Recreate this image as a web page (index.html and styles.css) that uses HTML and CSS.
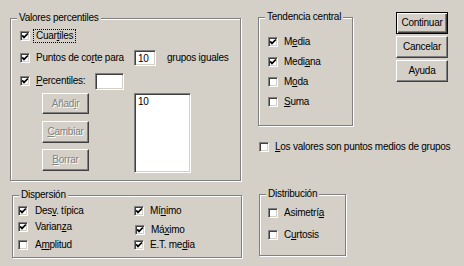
FILE: index.html
```html
<!DOCTYPE html>
<html lang="es">
<head>
<meta charset="utf-8">
<title>Frecuencias: Estadísticos</title>
<link rel="stylesheet" href="styles.css">
</head>
<body>
<div class="dialog">
  <div class="col-left">
    <fieldset class="group g-valores">
      <legend>Valores percentiles</legend>
      <div class="gbody">
        <div class="row r-cuart">
          <span class="cb"><svg viewBox="0 0 8 8" width="8" height="8"><path d="M1.2 3.4 L3 5.4 L6.9 1.5" fill="none" stroke="#000" stroke-width="1.7"/></svg></span>
          <span class="lbl focus">Cuar<u>t</u>iles</span>
        </div>
        <div class="row r-puntos">
          <span class="cb"><svg viewBox="0 0 8 8" width="8" height="8"><path d="M1.2 3.4 L3 5.4 L6.9 1.5" fill="none" stroke="#000" stroke-width="1.7"/></svg></span>
          <span class="lbl w-puntos">Puntos de co<u>r</u>te para</span>
          <span class="field f-puntos">10</span>
          <span class="lbl after">grupos iguales</span>
        </div>
        <div class="row r-perc">
          <span class="cb"><svg viewBox="0 0 8 8" width="8" height="8"><path d="M1.2 3.4 L3 5.4 L6.9 1.5" fill="none" stroke="#000" stroke-width="1.7"/></svg></span>
          <span class="lbl w-perc"><u>P</u>ercentiles:</span>
          <span class="field f-perc"></span>
        </div>
        <div class="perc-edit">
          <div class="btn-col">
            <button class="btn dis b-add">Añad<u>i</u>r</button>
            <button class="btn dis b-chg"><u>C</u>ambiar</button>
            <button class="btn dis b-del"><u>B</u>orrar</button>
          </div>
          <div class="listbox">10</div>
        </div>
      </div>
    </fieldset>
    <fieldset class="group g-disp">
      <legend>Dispersión</legend>
      <div class="gbody">
        <div class="row">
          <span class="cb"><svg viewBox="0 0 8 8" width="8" height="8"><path d="M1.2 3.4 L3 5.4 L6.9 1.5" fill="none" stroke="#000" stroke-width="1.7"/></svg></span>
          <span class="lbl l-left">Des<u>v</u>. típica</span>
        </div>
        <div class="row">
          <span class="cb"><svg viewBox="0 0 8 8" width="8" height="8"><path d="M1.2 3.4 L3 5.4 L6.9 1.5" fill="none" stroke="#000" stroke-width="1.7"/></svg></span>
          <span class="lbl">Mí<u>n</u>imo</span>
        </div>
        <div class="row up">
          <span class="cb"><svg viewBox="0 0 8 8" width="8" height="8"><path d="M1.2 3.4 L3 5.4 L6.9 1.5" fill="none" stroke="#000" stroke-width="1.7"/></svg></span>
          <span class="lbl l-left">Varian<u>z</u>a</span>
        </div>
        <div class="row down">
          <span class="cb cb-shift"><svg viewBox="0 0 8 8" width="8" height="8"><path d="M1.2 3.4 L3 5.4 L6.9 1.5" fill="none" stroke="#000" stroke-width="1.7"/></svg></span>
          <span class="lbl">Má<u>x</u>imo</span>
        </div>
        <div class="row">
          <span class="cb"></span>
          <span class="lbl l-left">A<u>m</u>plitud</span>
        </div>
        <div class="row">
          <span class="cb"><svg viewBox="0 0 8 8" width="8" height="8"><path d="M1.2 3.4 L3 5.4 L6.9 1.5" fill="none" stroke="#000" stroke-width="1.7"/></svg></span>
          <span class="lbl">E.T. me<u>d</u>ia</span>
        </div>
      </div>
    </fieldset>
  </div>

  <div class="col-right">
    <div class="top-row">
      <fieldset class="group g-tend">
        <legend>Tendencia central</legend>
        <div class="gbody">
          <div class="row">
            <span class="cb"><svg viewBox="0 0 8 8" width="8" height="8"><path d="M1.2 3.4 L3 5.4 L6.9 1.5" fill="none" stroke="#000" stroke-width="1.7"/></svg></span>
            <span class="lbl">M<u>e</u>dia</span>
          </div>
          <div class="row">
            <span class="cb"><svg viewBox="0 0 8 8" width="8" height="8"><path d="M1.2 3.4 L3 5.4 L6.9 1.5" fill="none" stroke="#000" stroke-width="1.7"/></svg></span>
            <span class="lbl">Medi<u>a</u>na</span>
          </div>
          <div class="row">
            <span class="cb"></span>
            <span class="lbl">M<u>o</u>da</span>
          </div>
          <div class="row">
            <span class="cb"></span>
            <span class="lbl"><u>S</u>uma</span>
          </div>
        </div>
      </fieldset>
      <div class="buttons">
        <button class="btn default">Continuar</button>
        <button class="btn">Cancelar</button>
        <button class="btn">Ayuda</button>
      </div>
    </div>
    <div class="row cb-row">
      <span class="cb"></span>
      <span class="lbl"><u>L</u>os valores son puntos medios de grupos</span>
    </div>
    <fieldset class="group g-dist">
      <legend>Distribución</legend>
      <div class="gbody">
        <div class="row">
          <span class="cb"></span>
          <span class="lbl">Asimetrí<u>a</u></span>
        </div>
        <div class="row">
          <span class="cb"></span>
          <span class="lbl">C<u>u</u>rtosis</span>
        </div>
      </div>
    </fieldset>
  </div>
</div>
</body>
</html>
```

FILE: styles.css
```css
* { box-sizing: border-box; }

html, body {
  margin: 0;
  padding: 0;
}

body {
  width: 464px;
  height: 266px;
  overflow: hidden;
  background: #d4d0c8;
  color: #000;
  font-family: "Liberation Sans", Arial, sans-serif;
  font-size: 10px;
  letter-spacing: -0.25px;
  line-height: 12px;
}

u { text-decoration-thickness: 1px; text-underline-offset: 1px; }

.dialog {
  display: flex;
  align-items: flex-start;
  padding: 11px 0 0 10px;
}

/* ---------- group boxes ---------- */
.group {
  margin: 0;
  padding: 0;
  min-width: 0;
  border: 1px solid #808080;
  box-shadow: inset 1px 1px 0 #fff, 1px 1px 0 #fff;
}

.group legend {
  margin-left: 6px;
  padding: 0 2px;
  height: 12px;
  line-height: 12px;
  background: #d4d0c8;
  white-space: nowrap;
}

/* ---------- common rows / controls ---------- */
.row {
  display: flex;
  align-items: center;
  white-space: nowrap;
}

.cb {
  flex: none;
  width: 10px;
  height: 10px;
  border: 1px solid;
  border-color: #808080 #fff #fff #808080;
  box-shadow: inset 1px 1px 0 #404040, inset -1px -1px 0 #d4d0c8;
  background: #fff;
}
.cb svg { display: block; }

.lbl { margin-left: 6px; }

.lbl.focus {
  margin-left: 3px;
  padding: 0 2px;
  border: 1px dotted #000;
}

.field {
  flex: none;
  border: 1px solid;
  border-color: #808080 #fff #fff #808080;
  box-shadow: inset 1px 1px 0 #404040, inset -1px -1px 0 #d4d0c8;
  background: #fff;
  padding: 2px 0 0 3px;
}

.btn {
  display: block;
  margin: 0;
  padding: 0;
  font: inherit;
  letter-spacing: inherit;
  color: #000;
  background: #d4d0c8;
  border: 1px solid;
  border-color: #fff #404040 #404040 #fff;
  box-shadow: inset -1px -1px 0 #808080;
  text-align: center;
  line-height: 12px;
}

.btn.default {
  border: 1px solid #000;
  box-shadow: inset 1px 1px 0 #fff, inset -1px -1px 0 #404040, inset -2px -2px 0 #808080;
}

.btn.dis {
  color: #808080;
  text-shadow: 1px 1px 0 #fff;
}

/* ---------- Valores percentiles ---------- */
.g-valores { width: 231px; margin-top: 1px; }
.g-valores .gbody { padding: 1px 0 7px 9px; }

.r-cuart { height: 22px; }
.r-puntos { height: 22px; }
.r-perc { height: 24px; }

.w-puntos { width: 98px; }
.f-puntos { width: 22px; height: 16px; }
.lbl.after { margin-left: 11px; }

.w-perc { width: 59px; }
.f-perc { width: 29px; height: 17px; }

.perc-edit {
  display: flex;
  height: 80px;
}

.btn-col {
  display: flex;
  flex-direction: column;
  margin-left: 22px;
  width: 47px;
}
.btn-col .btn { width: 47px; height: 22px; }
.btn-col .b-add { height: 21px; }
.btn-col .b-chg { margin-top: 7px; }
.btn-col .b-del { margin-top: 6px; }

.listbox {
  margin-left: 45px;
  width: 57px;
  height: 80px;
  border: 1px solid;
  border-color: #808080 #fff #fff #808080;
  box-shadow: inset 1px 1px 0 #404040, inset -1px -1px 0 #d4d0c8;
  background: #fff;
  padding: 2px 0 0 3px;
}

/* ---------- Dispersión ---------- */
.g-disp { width: 230px; margin: 8px 0 0 2px; }
.g-disp .gbody {
  display: grid;
  grid-template-columns: 116px auto;
  grid-template-rows: 18px 16px 18px;
  padding: 1px 0 3px 5px;
}
.g-disp .l-left { margin-left: 7px; }
.g-disp .row.up { margin-top: -3px; }
.g-disp .row.down { margin-top: 4px; }
.g-disp .cb-shift { margin-left: 1px; }

/* ---------- right side ---------- */
.col-right {
  margin-left: 16px;
  display: flex;
  flex-direction: column;
  align-items: flex-start;
}

.top-row {
  display: flex;
  align-items: flex-start;
}

.g-tend { width: 95px; }
.g-tend .gbody { padding: 9px 0 13px 9px; }
.g-tend .row { height: 20px; }

.buttons {
  margin: 1px 0 0 43px;
  display: flex;
  flex-direction: column;
  gap: 2px;
}
.buttons .btn { width: 52px; height: 22px; }

.cb-row {
  height: 20px;
  margin: 11px 0 0 1px;
}

.g-dist { width: 87px; margin: 31px 0 0 1px; }
.g-dist .gbody { padding: 2px 0 9px 8px; }
.g-dist .row { height: 22px; }
```
